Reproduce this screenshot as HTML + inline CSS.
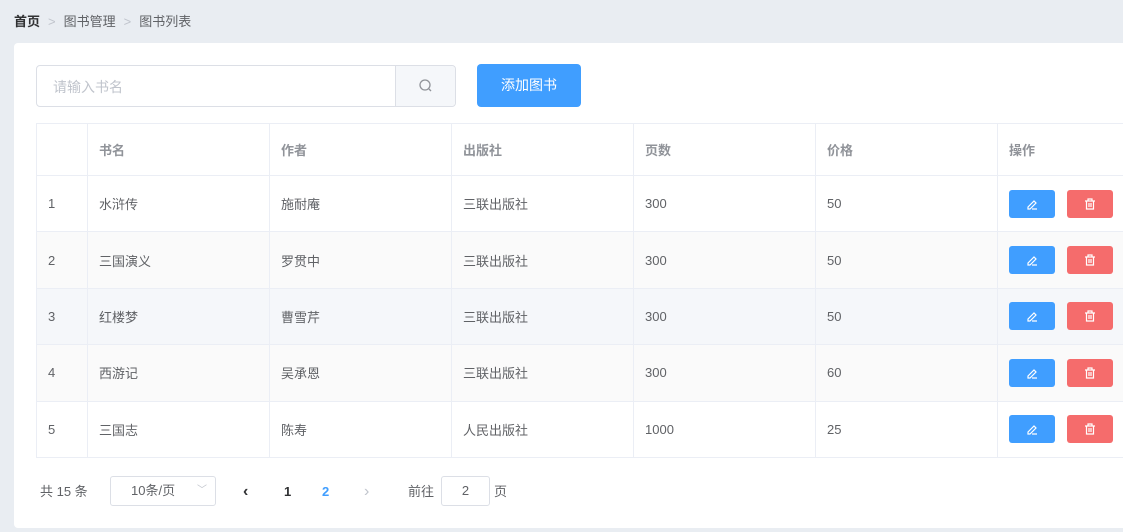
<!DOCTYPE html>
<html><head><meta charset="utf-8"><style>
*{box-sizing:border-box;margin:0;padding:0}
body{width:1140px;height:532px;background:#e9edf2;font-family:"Liberation Sans","Noto Sans CJK SC",sans-serif;font-size:13px;color:#606266;position:relative;overflow:hidden}
.bc{position:absolute;left:14px;top:11px;font-size:13px;color:#606266}
.bc b{color:#303133}
.bc .s{color:#c0c4cc;margin:0 8px}
.card{position:absolute;left:14px;top:43px;width:1140px;height:485px;background:#fff;border-radius:4px}
.rw{position:absolute;left:1123px;top:0;width:20px;height:532px;background:#fff;z-index:5}
.inp{position:absolute;left:36px;top:65px;width:420px;height:42px;border:1px solid #dcdfe6;border-radius:4px;background:#fff}
.inp span{position:absolute;left:16px;top:11px;color:#c0c4cc;font-size:14px}
.inp .ap{position:absolute;left:358px;top:0;width:60px;height:40px;background:#f5f7fa;border-left:1px solid #dcdfe6;border-radius:0 4px 4px 0}
.add{position:absolute;left:477px;top:64px;width:104px;height:43px;background:#409eff;border-radius:4px;color:#fff;font-size:14px;text-align:center;line-height:43px}
table{position:absolute;left:36px;top:123px;border-collapse:collapse;width:1100px}
td,th{border:1px solid #ebeef5;text-align:left;padding-left:11px;font-weight:normal;height:56.4px;padding-top:0;padding-bottom:0}
th{height:52px;color:#909399;font-weight:bold}
tr.s td{background:#fafafa}
tr.h td{background:#f5f7fa}
.b{display:inline-block;width:46px;height:28px;border-radius:3px;vertical-align:middle;position:relative}
.e{background:#409eff}.d{background:#f56c6c;margin-left:12px}
.b svg{position:absolute;left:17px;top:8px}
.pg{position:absolute;top:476px;left:0;width:600px;height:32px;font-size:13px}
.pg>*{position:absolute;top:0;line-height:32px}
.sel{left:110px;width:106px;height:30px;border:1px solid #dcdfe6;border-radius:3px;line-height:28px;padding-left:20px}
.jump{left:441px;width:49px;height:30px;border:1px solid #dcdfe6;border-radius:3px;text-align:center;line-height:28px}
</style></head><body>
<div class="bc"><b>首页</b><span class="s">&gt;</span>图书管理<span class="s">&gt;</span>图书列表</div>
<div class="card"></div>
<div class="rw"></div>
<div class="inp"><span>请输入书名</span><div class="ap"><svg width="60" height="40"><circle cx="29" cy="19" r="5" fill="none" stroke="#909399" stroke-width="1.3"/><line x1="33" y1="23" x2="35" y2="25" stroke="#909399" stroke-width="1.3"/></svg></div></div>
<div class="add">添加图书</div>
<table>
<tr><th style="width:51px"></th><th style="width:182px">书名</th><th style="width:182px">作者</th><th style="width:182px">出版社</th><th style="width:182px">页数</th><th style="width:182px">价格</th><th>操作</th></tr>
<tr><td>1</td><td>水浒传</td><td>施耐庵</td><td>三联出版社</td><td>300</td><td>50</td><td><span class="b e"><svg width="12" height="12"><path d="M2 9 L8 3 L10 5 L4 11 L2 11Z M6 11 H11" fill="none" stroke="#fff" stroke-width="1.2"/></svg></span><span class="b d"><svg width="12" height="12"><path d="M1 3H11M4 3V1H8V3M2.5 3V11H9.5V3M5 5V9M7 5V9" fill="none" stroke="#fff" stroke-width="1.2"/></svg></span></td></tr>
<tr class="s"><td>2</td><td>三国演义</td><td>罗贯中</td><td>三联出版社</td><td>300</td><td>50</td><td><span class="b e"><svg width="12" height="12"><path d="M2 9 L8 3 L10 5 L4 11 L2 11Z M6 11 H11" fill="none" stroke="#fff" stroke-width="1.2"/></svg></span><span class="b d"><svg width="12" height="12"><path d="M1 3H11M4 3V1H8V3M2.5 3V11H9.5V3M5 5V9M7 5V9" fill="none" stroke="#fff" stroke-width="1.2"/></svg></span></td></tr>
<tr class="h"><td>3</td><td>红楼梦</td><td>曹雪芹</td><td>三联出版社</td><td>300</td><td>50</td><td><span class="b e"><svg width="12" height="12"><path d="M2 9 L8 3 L10 5 L4 11 L2 11Z M6 11 H11" fill="none" stroke="#fff" stroke-width="1.2"/></svg></span><span class="b d"><svg width="12" height="12"><path d="M1 3H11M4 3V1H8V3M2.5 3V11H9.5V3M5 5V9M7 5V9" fill="none" stroke="#fff" stroke-width="1.2"/></svg></span></td></tr>
<tr class="s"><td>4</td><td>西游记</td><td>吴承恩</td><td>三联出版社</td><td>300</td><td>60</td><td><span class="b e"><svg width="12" height="12"><path d="M2 9 L8 3 L10 5 L4 11 L2 11Z M6 11 H11" fill="none" stroke="#fff" stroke-width="1.2"/></svg></span><span class="b d"><svg width="12" height="12"><path d="M1 3H11M4 3V1H8V3M2.5 3V11H9.5V3M5 5V9M7 5V9" fill="none" stroke="#fff" stroke-width="1.2"/></svg></span></td></tr>
<tr><td>5</td><td>三国志</td><td>陈寿</td><td>人民出版社</td><td>1000</td><td>25</td><td><span class="b e"><svg width="12" height="12"><path d="M2 9 L8 3 L10 5 L4 11 L2 11Z M6 11 H11" fill="none" stroke="#fff" stroke-width="1.2"/></svg></span><span class="b d"><svg width="12" height="12"><path d="M1 3H11M4 3V1H8V3M2.5 3V11H9.5V3M5 5V9M7 5V9" fill="none" stroke="#fff" stroke-width="1.2"/></svg></span></td></tr>
</table>
<div class="pg">
<span style="left:40px">共 15 条</span>
<div class="sel">10条/页<span style="position:absolute;right:8px;color:#c0c4cc;font-size:10px">﹀</span></div>
<span style="left:243px;color:#303133;font-weight:bold;font-size:16px">‹</span>
<span style="left:284px;color:#303133;font-weight:bold">1</span>
<span style="left:322px;color:#409eff;font-weight:bold">2</span>
<span style="left:364px;color:#c0c4cc;font-size:16px">›</span>
<span style="left:408px">前往</span>
<div class="jump">2</div>
<span style="left:494px">页</span>
</div>
</body></html>
